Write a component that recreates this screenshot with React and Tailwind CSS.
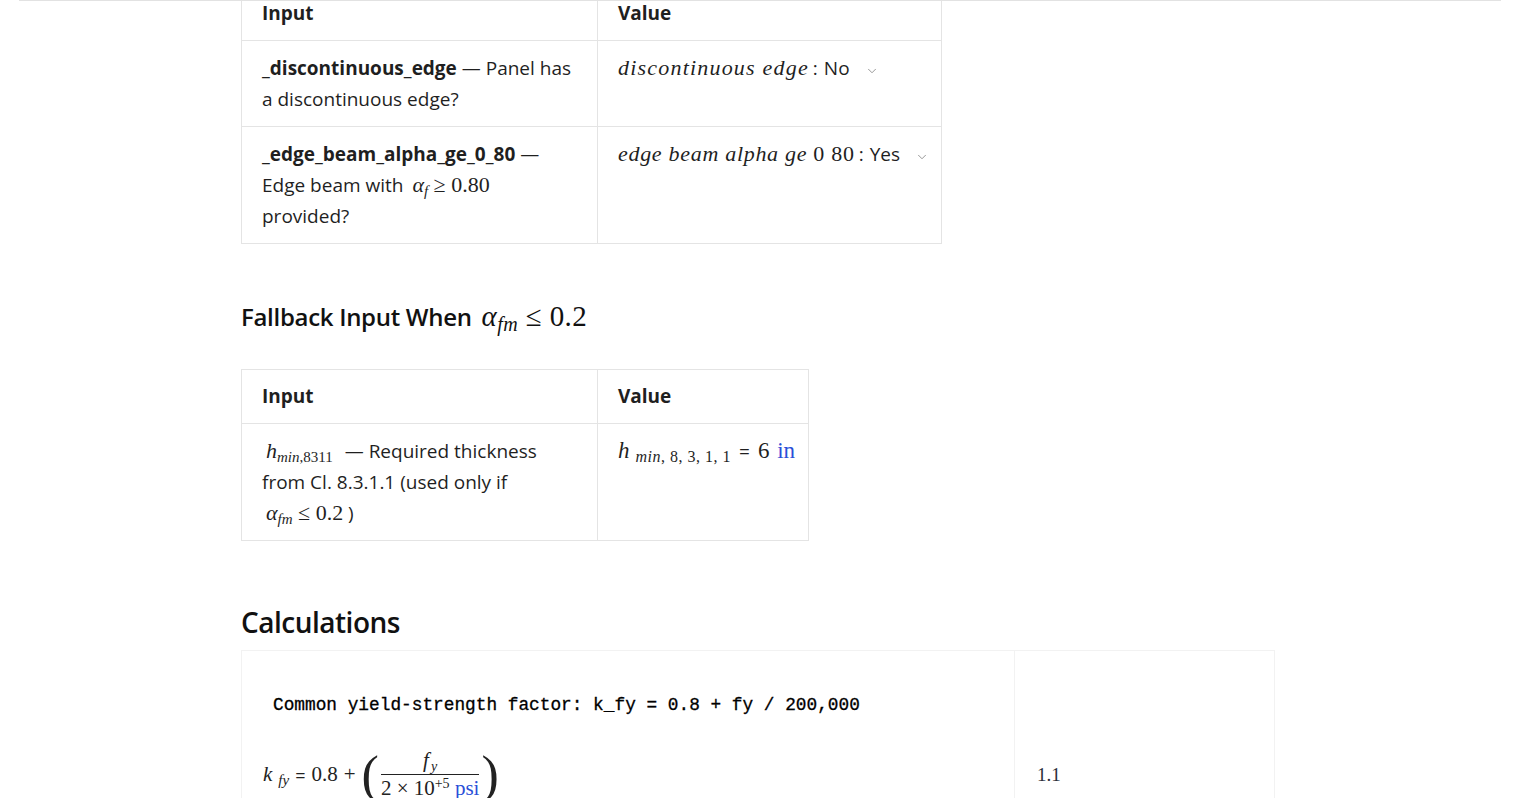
import React from "react";
import { ChevronDown } from "lucide-react";

const MATH = "font-['Liberation_Serif','DejaVu_Serif',serif] leading-none whitespace-nowrap";

function Select({ value }) {
  return (
    <span className="ml-1.5 inline-flex items-center gap-[15px] text-[19px] text-[#1f1f1f]">
      {value}
      <ChevronDown size={14} strokeWidth={1.3} className="mt-1 text-[#777]" />
    </span>
  );
}

function Cell({ children, className = "" }) {
  return <td className={`border border-[#e4e4e4] px-5 pt-3 pb-[11px] align-top ${className}`}>{children}</td>;
}

function HeadCell({ children }) {
  return <th className="border border-[#e4e4e4] px-5 py-[11px] text-left font-bold">{children}</th>;
}

export default function App() {
  return (
    <div className="min-h-screen bg-white font-['Open_Sans','Noto_Sans',sans-serif] text-[19px] leading-[31px] text-[#1f1f1f]">
      <div className="mx-[19px] h-px bg-[#e2e2e2]" />
      <div className="h-[797px] overflow-hidden">
        <div className="-mt-[15px] pl-[241px]">
          <table className="w-[701px] table-fixed border-collapse">
            <colgroup>
              <col className="w-[356px]" />
              <col />
            </colgroup>
            <thead>
              <tr>
                <HeadCell>Input</HeadCell>
                <HeadCell>Value</HeadCell>
              </tr>
            </thead>
            <tbody>
              <tr>
                <Cell>
                  <b>_discontinuous_edge</b> — Panel has a discontinuous edge?
                </Cell>
                <Cell className="whitespace-nowrap">
                  <span className={`${MATH} text-[22px] tracking-[1.2px] italic`}>discontinuous edge</span>
                  <span className="ml-1">:</span>
                  <Select value="No" />
                </Cell>
              </tr>
              <tr>
                <Cell>
                  <b>_edge_beam_alpha_ge_0_80</b> — Edge beam with{" "}
                  <span className={`${MATH} ml-1 text-[22px]`}>
                    <i>α</i>
                    <sub className="text-[15px] italic">f</sub> ≥ 0.80
                  </span>{" "}
                  provided?
                </Cell>
                <Cell className="whitespace-nowrap">
                  <span className={`${MATH} text-[22px] tracking-[0.7px]`}>
                    <i>edge beam alpha ge</i> 0 80
                  </span>
                  <span className="ml-1">:</span>
                  <Select value="Yes" />
                </Cell>
              </tr>
            </tbody>
          </table>

          <h3 className="mt-[57px] text-[24px] font-semibold leading-8 tracking-[-0.3px] text-[#111]">
            Fallback Input When{" "}
            <span className={`${MATH} ml-1 text-[29px] font-normal tracking-[0.4px]`}>
              <i>α</i>
              <sub className="text-[20px] italic">fm</sub> ≤ 0.2
            </span>
          </h3>

          <table className="mt-[36px] w-[568px] table-fixed border-collapse">
            <colgroup>
              <col className="w-[356px]" />
              <col />
            </colgroup>
            <thead>
              <tr>
                <HeadCell>Input</HeadCell>
                <HeadCell>Value</HeadCell>
              </tr>
            </thead>
            <tbody>
              <tr>
                <Cell>
                  <span className={`${MATH} ml-1 mr-3 text-[22px]`}>
                    <i>h</i>
                    <sub className="text-[15px]">
                      <i>min</i>,8311
                    </sub>
                  </span>
                  — Required thickness from Cl. 8.3.1.1 (used only if{" "}
                  <span className={`${MATH} ml-1 text-[22px]`}>
                    <i>α</i>
                    <sub className="text-[15px] italic">fm</sub> ≤ 0.2
                  </span>{" "}
                  )
                </Cell>
                <Cell className="whitespace-nowrap">
                  <span className={`${MATH} text-[23px]`}>
                    <i>h</i>
                    <sub className="ml-1.5 text-[16px] tracking-[0.5px]">
                      <i>min</i>, 8, 3, 1, 1
                    </sub>
                  </span>
                  <span className="mx-2">=</span>
                  <span className={`${MATH} text-[23px]`}>
                    6 <span className="ml-0.5 text-[#2a4fd8]">in</span>
                  </span>
                </Cell>
              </tr>
            </tbody>
          </table>

          <h2 className="mt-[63px] text-[28px] font-semibold leading-9 tracking-[-0.5px] text-[#111]">Calculations</h2>

          <table className="mt-[10px] w-[1034px] table-fixed border-collapse">
            <colgroup>
              <col className="w-[773px]" />
              <col />
            </colgroup>
            <tbody>
              <tr>
                <td className="border border-[#f2f2f2] px-[21px] pt-[38px] align-top">
                  <pre className="pl-[10px] font-['Liberation_Mono','DejaVu_Sans_Mono',monospace] text-[17.8px] leading-8 text-black [-webkit-text-stroke:0.3px_#000]">
                    Common yield-strength factor: k_fy = 0.8 + fy / 200,000
                  </pre>
                  <div className={`${MATH} mt-[26px] flex items-center text-[21px] text-[#222]`}>
                    <i>k</i>
                    <sub className="ml-1.5 mt-1 text-[15px] italic">fy</sub>
                    <span className="mx-1.5 font-['Open_Sans',sans-serif] text-[18px]">=</span>
                    0.8<span className="mx-1.5">+</span>
                    <span className="flex items-center">
                      <span className="text-[52px] font-extralight leading-none">(</span>
                      <span className="flex flex-col items-center px-0.5 leading-[27px]">
                        <span className="text-[21px]">
                          <i>f</i>
                          <sub className="ml-0.5 text-[14px] italic">y</sub>
                        </span>
                        <span className="w-full border-t border-[#222]" />
                        <span className="text-[21px]">
                          2 × 10<sup className="text-[14px]">+5</sup>{" "}
                          <span className="text-[#2a4fd8]">psi</span>
                        </span>
                      </span>
                      <span className="text-[52px] font-extralight leading-none">)</span>
                    </span>
                  </div>
                </td>
                <td className="border border-[#f2f2f2] px-[22px] pt-[108px] align-top font-['Liberation_Serif',serif] text-[19px] text-[#2b2f3a]">
                  1.1
                </td>
              </tr>
            </tbody>
          </table>
        </div>
      </div>
    </div>
  );
}
